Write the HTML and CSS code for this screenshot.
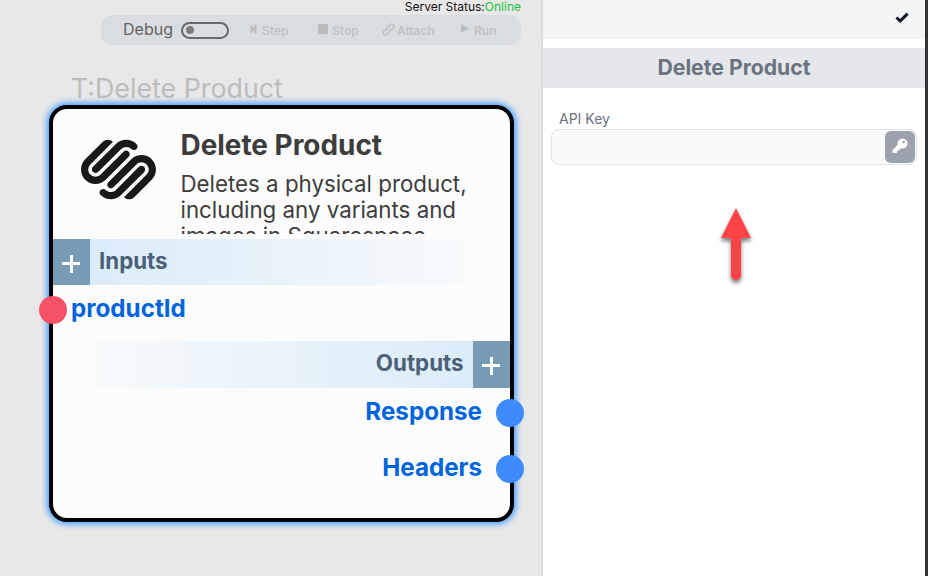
FILE: index.html
```html
<!DOCTYPE html>
<html lang="en">
<head>
<meta charset="utf-8">
<title>Delete Product</title>
<link rel="stylesheet" href="styles.css">
</head>
<body>
<div class="app">
  <main class="canvas">
    <div class="status">Server Status:<span class="online">Online</span></div>
    <div class="toolbar">
      <span class="debug">Debug</span>
      <span class="toggle"><span class="knob"></span></span>
      <span class="tool step"><svg width="7" height="10" viewBox="0 0 7 10"><path d="M0.5 0.5L5 5L0.5 9.5ZM4.500 0.5H6.500V9.500H4.500Z"/></svg>Step</span>
      <span class="tool stop"><svg width="10" height="10" viewBox="0 0 10 10"><path d="M0 0H10V10H0Z"/></svg>Stop</span>
      <span class="tool attach"><svg class="link" width="13" height="13" viewBox="0 0 13 13"><path d="M5.2 7.8C4.2 6.8 4.3 5.5 5.1 4.7L8 1.8C9 .8 10.4.8 11.3 1.7S12.200 4 11.200 5L9.500 6.700M7.800 5.200C8.800 6.200 8.700 7.500 7.900 8.300L5 11.200C4 12.200 2.600 12.200 1.700 11.300S.8 9 1.800 8L3.500 6.300"/></svg>Attach</span>
      <span class="tool run"><svg width="8" height="9" viewBox="0 0 8 9"><path d="M0 0L8 4.500L0 9Z"/></svg>Run</span>
    </div>
    <div class="node-label">T:Delete Product</div>
    <section class="node">
      <header class="node-head">
        <svg class="logo" viewBox="0 0 24 24"><path d="M22.655 8.719c-1.802-1.801-4.726-1.801-6.564 0l-7.351 7.35c-.45.45-.45 1.200 0 1.650.45.449 1.200.449 1.650 0l7.351-7.351c.899-.899 2.362-.899 3.264 0 .9.9.9 2.364 0 3.264l-7.239 7.239c.9.899 2.362.899 3.263 0l5.589-5.589c1.836-1.838 1.836-4.763-.037-6.563zm-2.475 2.437c-.451-.45-1.201-.45-1.650 0l-7.354 7.389c-.9.899-2.361.899-3.262 0-.45-.45-1.200-.45-1.650 0s-.45 1.200 0 1.649c1.801 1.801 4.726 1.801 6.564 0l7.351-7.350c.449-.487.449-1.239.001-1.688zm-2.439-7.350c-1.801-1.801-4.726-1.801-6.564 0l-7.351 7.351c-.45.449-.45 1.199 0 1.649s1.200.45 1.650 0l7.395-7.351c.9-.899 2.371-.899 3.270 0 .451.45 1.201.45 1.650 0 .421-.487.421-1.199-.05-1.649zm-2.475 2.475c-.45-.449-1.200-.449-1.650 0l-7.351 7.351c-.899.9-2.363.9-3.265 0-.9-.899-.9-2.363 0-3.264l7.239-7.239c-.9-.9-2.362-.9-3.263 0L1.350 8.719c-1.800 1.800-1.800 4.762 0 6.563 1.801 1.801 4.725 1.801 6.564 0l7.351-7.351c.451-.488.451-1.238 0-1.650z"/></svg>
        <div class="node-copy">
          <h1>Delete Product</h1>
          <p>Deletes a physical product, including any variants and images in Squarespace.</p>
        </div>
      </header>
      <div class="bar inputs"><span class="plus"></span><span>Inputs</span></div>
      <div class="port in">productId<i class="dot"></i></div>
      <div class="bar outputs"><span>Outputs</span><span class="plus"></span></div>
      <div class="port out">Response<i class="dot"></i></div>
      <div class="port out">Headers<i class="dot"></i></div>
    </section>
  </main>
  <aside class="panel">
    <div class="panel-top"><svg width="14" height="11" viewBox="0 0 14 11"><path d="M1.500 5.500L5.200 9L12.600 1.600"/></svg></div>
    <h2>Delete Product</h2>
    <label for="key">API Key</label>
    <div class="field">
      <input id="key" type="text">
      <button type="button" aria-label="Key"><svg width="16" height="16" viewBox="0 0 16 16"><path fill-rule="evenodd" d="M10.500.5a5 5 0 1 1-1.400 9.800L8 11.400H6.500V13H5v1.500L4.500 15H1.500Q.5 15 .5 14V12L5.700 6.800A5 5 0 0 1 10.500.5ZM11.700 2.800a1.300 1.300 0 1 0 .01 0Z"/></svg></button>
    </div>
  </aside>
  <svg class="arrow" width="50" height="92" viewBox="0 0 50 92"><path d="M25 8L40 38H30V75A5 5 0 0 1 20 75V38H10Z"/></svg>
</div>
</body>
</html>
```
FILE: styles.css
```css
* { box-sizing: border-box; }
body { margin: 0; font-family: Inter, "Liberation Sans", sans-serif; }
.app { position: relative; display: flex; width: 928px; height: 576px; overflow: hidden; background: #fff; }
.canvas { width: 543px; height: 576px; background: #e8e8e8; border-right: 2px solid #d9dce0; }
.status { height: 15px; padding-right: 20px; font-size: 12px; line-height: 14px; text-align: right; color: #111; }
.online { color: #18c440; }
.toolbar { display: flex; align-items: center; width: 420px; height: 30px; margin-left: 101px; padding-left: 22px; border-radius: 12px; background: #d9dde0; }
.debug { width: 58px; margin-top: -2px; font-size: 16px; color: #636363; }
.toggle { width: 48px; height: 17px; border: 2px solid #686868; border-radius: 9px; padding: 2px 3px; }
.knob { display: block; width: 8px; height: 8px; border-radius: 50%; background: #7c7c7c; }
.tool { display: flex; align-items: center; font-size: 12px; font-weight: 600; color: #c1c2c3; white-space: nowrap; }
.tool svg { margin-top: -3px; fill: #bcbcbc; }
.tool .link { margin-top: -2px; fill: none; stroke: #bcbcbc; stroke-width: 1.3; }
.step { width: 68px; margin-left: 21px; gap: 5px; }
.stop { width: 64px; gap: 4px; }
.attach { width: 79px; gap: 2px; }
.run { gap: 5px; }
.node-label { height: 60px; padding: 27px 0 0 71px; font-size: 26.800px; line-height: 33px; color: #bcbcbc; }
.node { width: 464.500px; height: 416.500px; margin-left: 49px; border: 4px solid #000; border-radius: 18px; background: #fcfcfc; box-shadow: 0 0 6px 2px #3c9aff; }
.node-head { display: flex; height: 130px; padding-left: 28px; }
.logo { width: 75px; height: 75px; margin-top: 22.500px; fill: #191919; }
.node-copy { width: 310px; height: 125px; margin-left: 24.500px; overflow: hidden; color: #3d3d3d; }
h1 { margin: 19px 0 9px; font-size: 27.900px; line-height: 34px; font-weight: 700; }
p { margin: 0; font-size: 22.300px; line-height: 26px; }
.bar { display: flex; height: 46.400px; font-size: 22.300px; font-weight: 700; line-height: 44px; color: #4c6078; }
.inputs { gap: 9px; background: linear-gradient(90deg, #d9eaf8, #eaf4fb 55%, #fcfcfc); }
.outputs { justify-content: flex-end; gap: 9px; background: linear-gradient(270deg, #d9eaf8, #eaf4fb 55%, #fcfcfc); }
.plus { width: 37px; height: 100%; background: linear-gradient(#fff, #fff) 9px 23px / 18px 3px no-repeat, linear-gradient(#fff, #fff) 17px 16px / 3px 18px no-repeat, #789bb6; }
.port { position: relative; height: 56px; font-size: 24.200px; font-weight: 700; line-height: 47px; color: #0064dc; }
.in { padding-left: 18px; }
.out { padding-right: 27.500px; text-align: right; }
.dot { position: absolute; top: 11px; width: 28px; height: 28px; border-radius: 50%; }
.in .dot { left: -14px; background: #f65166; }
.out .dot { right: -14.500px; background: #3d8bfd; }
.panel { width: 385px; border-right: 3px solid #343434; background: #fff; }
.panel-top { display: flex; justify-content: flex-end; height: 39px; padding: 12px 16px 0 0; background: #f3f4f6; }
.panel-top svg { fill: none; stroke: #111829; stroke-width: 3; }
h2 { height: 40px; margin: 9px 0 22px; background: #e5e7eb; font-size: 21.200px; font-weight: 700; line-height: 39px; text-align: center; color: #6b7280; }
label { display: block; height: 19px; padding-left: 16px; font-size: 14px; line-height: 18px; color: #6b7280; }
.field { display: flex; align-items: center; width: 366px; height: 36px; margin-left: 8px; padding-right: 1px; border: 1px solid #e1e4e9; border-radius: 8px; background: #f9fafb; }
input { flex: 1; min-width: 0; height: 30px; border: 0; background: none; }
button { display: flex; align-items: center; justify-content: center; width: 30px; height: 32px; padding: 0; border: 0; border-radius: 6px; background: #9ca3af; }
button svg { margin-top: -2px; fill: #fff; }
.arrow { position: absolute; left: 711px; top: 200px; fill: #ff4447; filter: drop-shadow(0 3px 2px rgba(0, 0, 0, .55)); }
```
